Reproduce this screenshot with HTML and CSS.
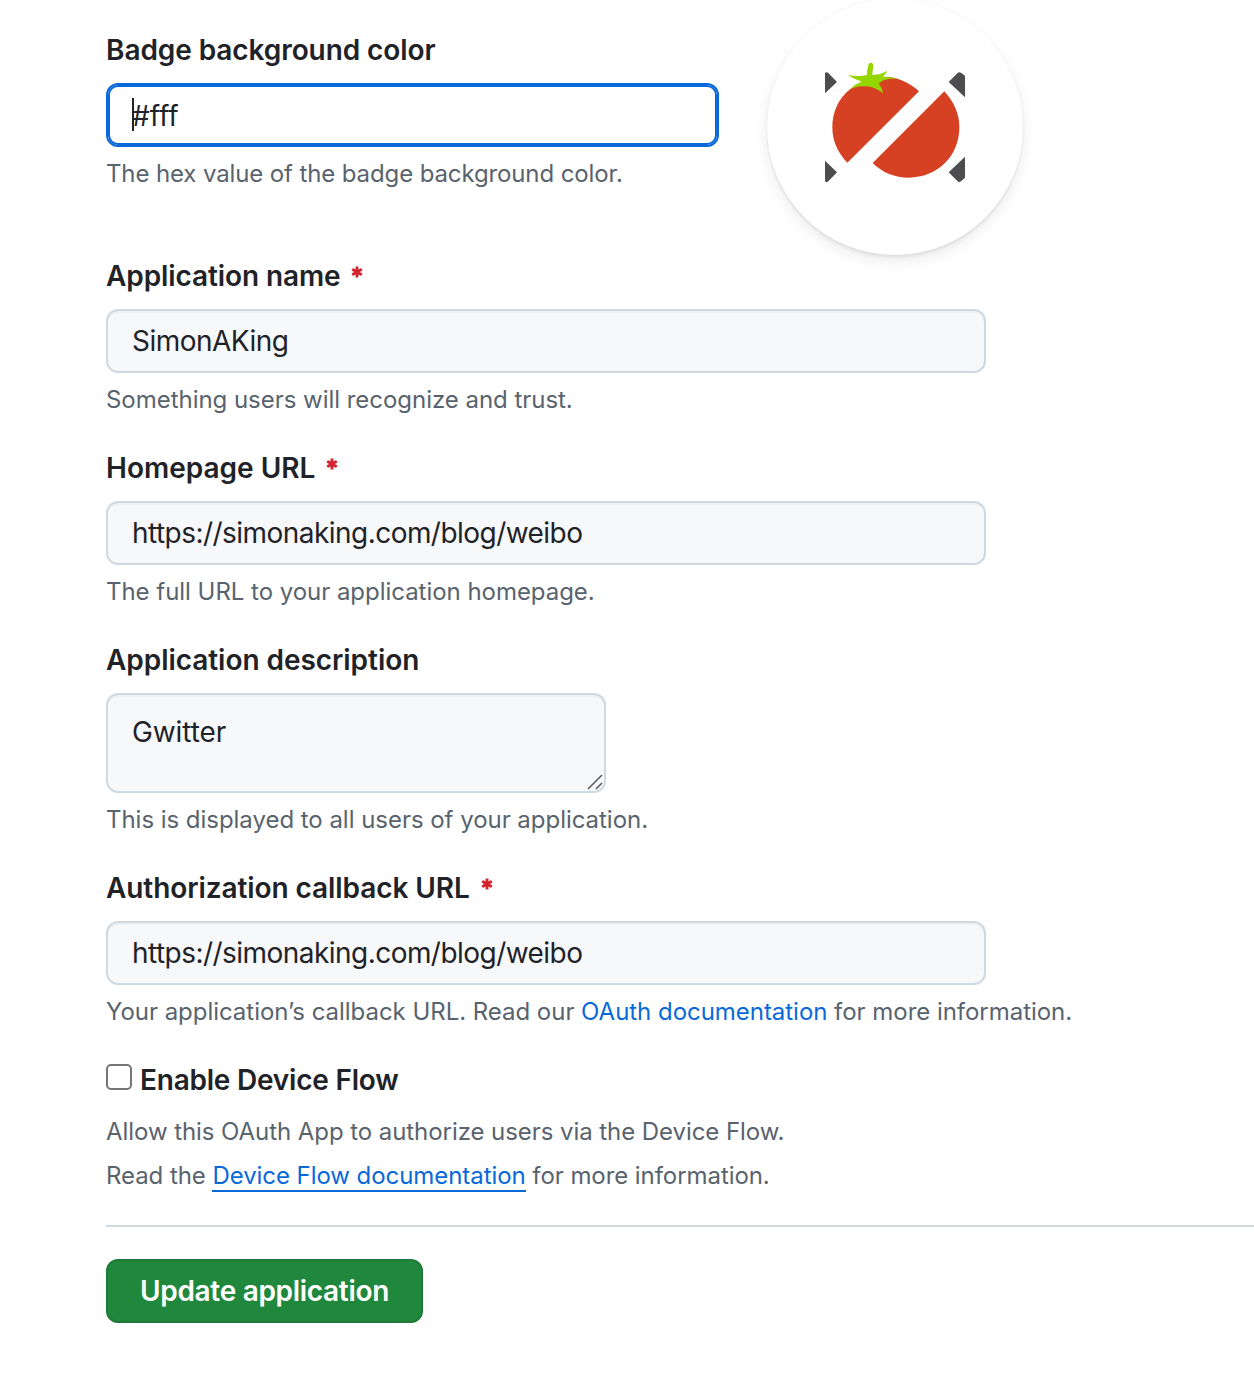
FILE: index.html
```html
<!DOCTYPE html>
<html lang="en">
<head>
<meta charset="utf-8">
<title>OAuth application settings</title>
<link rel="stylesheet" href="styles.css">
</head>
<body>
<form class="settings">
  <div class="badge-row">
    <div class="group badge-group">
      <label class="label"><span class="label-badge">Badge background color</span></label>
      <div class="field focused"><span class="caret"></span><span class="hex">#fff</span></div>
      <p class="note note-badge">The hex value of the badge background color.</p>
    </div>
    <div class="badge">
      <svg class="logo" viewBox="-129 -153 768 768" aria-hidden="true">
        <path fill="#4d4d4f" d="M45 69Q50 64 55 69L81 96 45 130ZM45 332L81 367 55 394Q50 399 45 394ZM465 77L453 68Q447 64 442 70L416 96 465 142ZM465 320L416 367 442 393Q447 398 453 394L465 383Z"/>
        <path fill="#d64123" d="M112 338C82 307 67 272 67 232C67 184 87 143 121 117L160 98 222 80C262 81 297 96 327 124ZM403 124C433 157 448 192 448 232C448 319 382 383 296 383C255 383 217 368 188 339Z"/>
        <path fill="#95d600" d="M119 118C131 106 143 99 155 95C141 90 126 83 114 75C134 79 153 80 171 74C171 63 173 52 176 43C178 37 187 37 189 43C190 54 187 65 187 74C204 75 218 71 230 63C232 65 229 70 218 80C234 80 249 82 262 87C239 84 217 88 206 102C213 109 217 118 219 130C204 118 188 111 170 109C151 107 134 110 119 118Z"/>
      </svg>
    </div>
  </div>
  <div class="group">
    <label class="label"><span class="label-name">Application name</span><svg class="star" viewBox="0 0 12 12"><path d="M6 .5v11M1.2 3.2l9.6 5.6M10.8 3.2L1.2 8.8"/></svg></label>
    <div class="field"><span class="value">SimonAKing</span></div>
    <p class="note">Something users will recognize and trust.</p>
  </div>
  <div class="group">
    <label class="label"><span>Homepage URL</span><svg class="star" viewBox="0 0 12 12"><path d="M6 .5v11M1.2 3.2l9.6 5.6M10.8 3.2L1.2 8.8"/></svg></label>
    <div class="field"><span class="value">https://simonaking.com/blog/weibo</span></div>
    <p class="note">The full URL to your application homepage.</p>
  </div>
  <div class="group">
    <label class="label"><span class="label-description">Application description</span></label>
    <div class="field area"><span class="value-description">Gwitter</span><svg class="grip" viewBox="0 0 16 16"><path d="M1 15L15 1M9 15l6-6"/></svg></div>
    <p class="note">This is displayed to all users of your application.</p>
  </div>
  <div class="group">
    <label class="label"><span class="label-callback">Authorization callback URL</span><svg class="star" viewBox="0 0 12 12"><path d="M6 .5v11M1.2 3.2l9.6 5.6M10.8 3.2L1.2 8.8"/></svg></label>
    <div class="field"><span class="value">https://simonaking.com/blog/weibo</span></div>
    <p class="note">Your application’s callback URL. Read our <a class="link">OAuth documentation</a> for more information.</p>
  </div>
  <div class="device">
    <label class="check-label"><span class="checkbox"></span><span class="label-device">Enable Device Flow</span></label>
    <p class="device-note">Allow this OAuth App to authorize users via the Device Flow.<br>Read the <a class="link underlined">Device Flow documentation</a> for more information.</p>
  </div>
  <div class="actions"><button class="submit" type="button">Update application</button></div>
</form>
</body>
</html>
```
FILE: styles.css
```css
* { box-sizing: border-box; }
body {
  margin: 0;
  height: 1380px;
  overflow: hidden;
  background: #fff;
  color: #1f2328;
  font-family: Inter, "Liberation Sans", sans-serif;
  font-size: 28px;
  line-height: 42px;
}
.settings { margin: -1px 0 0 106px; }
.badge-row { display: flex; gap: 48px; height: 256px; }
.badge-group { width: 613px; padding-top: 30px; }
.badge {
  width: 256px;
  height: 256px;
  border-radius: 50%;
  background: #fff;
  box-shadow: 0 2px 3px rgba(31, 35, 40, .09), 0 6px 14px rgba(31, 35, 40, .09);
}
.logo { display: block; width: 256px; height: 256px; }
.group { margin-bottom: 32px; }
.badge-group { margin-bottom: 0; }
.label { display: flex; height: 42px; margin-bottom: 12px; font-weight: 600; white-space: nowrap; }
.label-badge { letter-spacing: -.08px; }
.label-name { letter-spacing: -.1px; }
.label-description { letter-spacing: -.05px; }
.label-callback { letter-spacing: -.08px; }
.label-device { letter-spacing: -.22px; }
.star { width: 12px; height: 12px; margin: 11px 0 0 11px; stroke: #d1242f; stroke-width: 2.9; fill: none; }
.field {
  display: flex;
  align-items: center;
  width: 880px;
  height: 64px;
  padding: 0 24px;
  border: 2px solid #d0d9e0;
  border-radius: 12px;
  background: #f6f8fa;
  box-shadow: inset 0 2px 0 rgba(208, 215, 222, .2);
  white-space: nowrap;
}
.focused { width: 613px; border-color: #0969da; background: #fff; box-shadow: inset 0 0 0 2px #0969da; }
.caret { width: 2px; height: 33px; margin: 0 -2px 1px 0; background: #1f2328; }
.hex { padding-top: 1px; }
.value { letter-spacing: -.54px; }
.value-description { letter-spacing: -.1px; }
.area { position: relative; align-items: flex-start; width: 500px; height: 100px; padding-top: 16px; }
.grip { position: absolute; right: 1px; bottom: 1px; width: 16px; height: 16px; stroke: #555; stroke-width: 1.5; fill: none; }
.note {
  height: 33px;
  margin: 9px 0 0;
  color: #59636e;
  font-size: 24px;
  line-height: 36px;
  letter-spacing: -.035px;
  white-space: nowrap;
}
.note-badge { letter-spacing: -.12px; }
.link { color: #0969da; }
.underlined { border-bottom: 2px solid #0969da; }
.check-label { display: flex; align-items: flex-start; height: 42px; font-weight: 600; }
.checkbox { width: 26px; height: 26px; margin: 5px 8px 0 0; border: 2px solid #767676; border-radius: 5px; }
.device-note {
  margin: 9px 0 0;
  color: #59636e;
  font-size: 24px;
  line-height: 44px;
  letter-spacing: -.065px;
  white-space: nowrap;
}
.actions { margin-top: 27px; padding-top: 32px; border-top: 2px solid #d0d9e0; }
.submit {
  display: block;
  width: 317px;
  height: 64px;
  padding: 0;
  border: 2px solid #1f7a38;
  border-radius: 12px;
  background: #1f883d;
  color: #fff;
  font: 600 28px/42px Inter, "Liberation Sans", sans-serif;
  letter-spacing: -.31px;
  white-space: nowrap;
}
```
